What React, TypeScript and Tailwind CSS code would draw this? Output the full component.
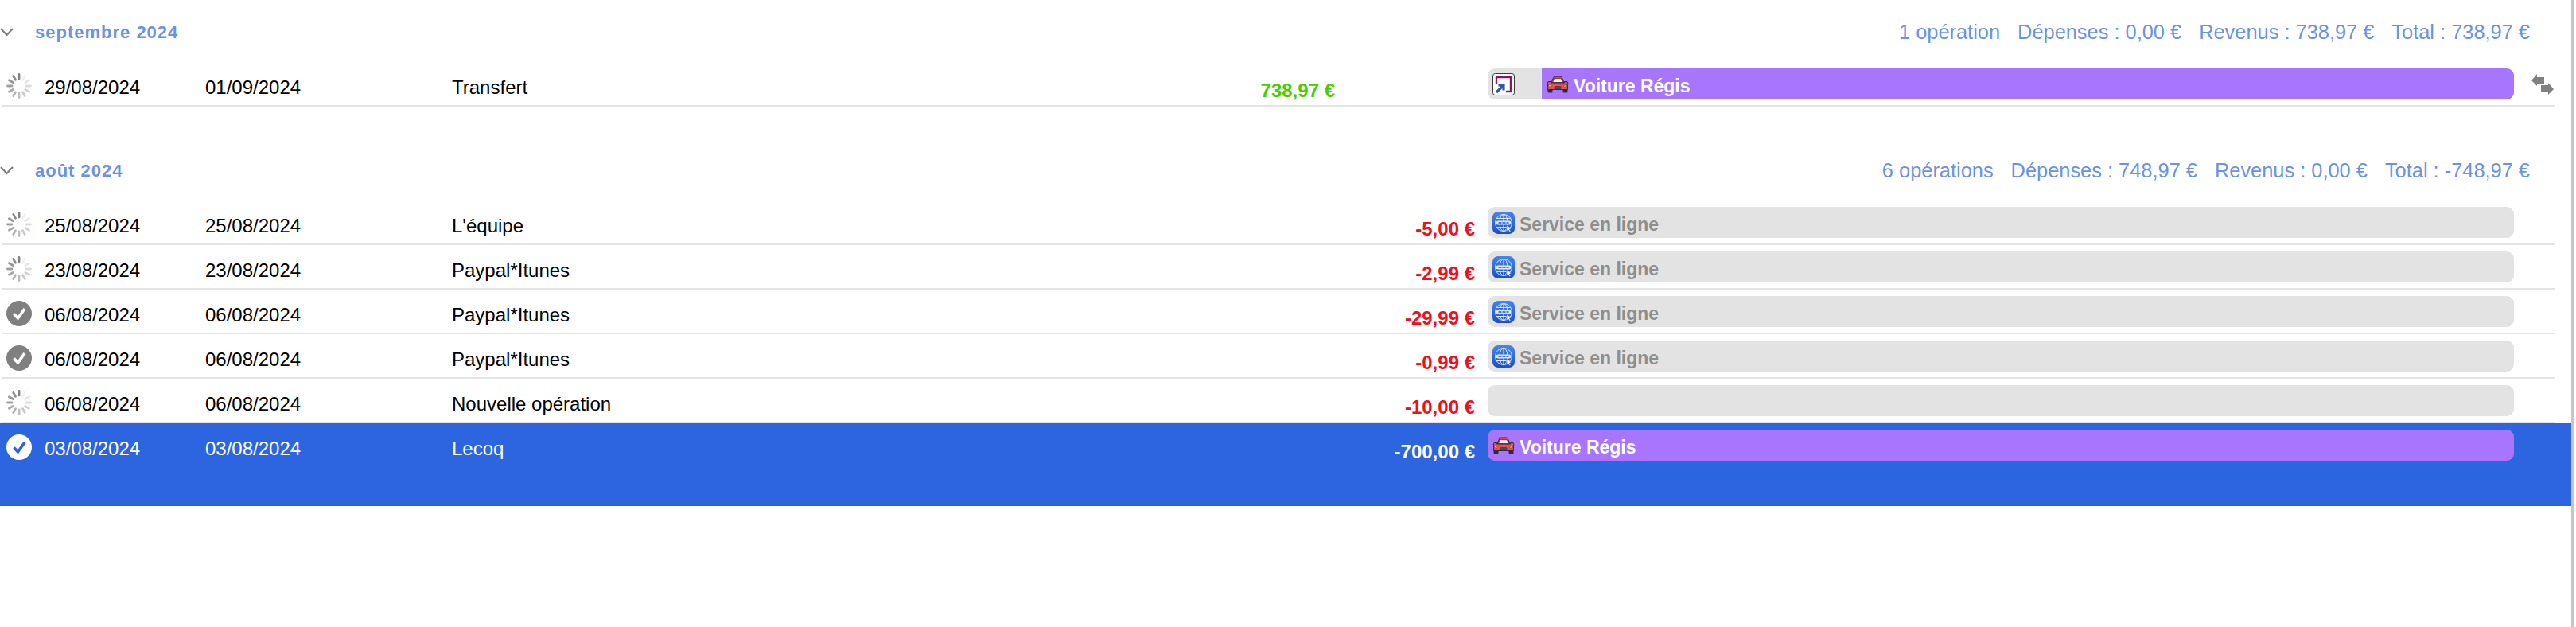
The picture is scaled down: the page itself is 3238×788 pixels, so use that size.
const BLUE_HEADER = "text-[#6b93e3]";

type Category = "online" | "car" | "none";

type Operation = {
  status: "pending" | "checked";
  date: string;
  valueDate: string;
  label: string;
  amount: string;
  category: Category;
  selected?: boolean;
};

const august: Operation[] = [
  { status: "pending", date: "25/08/2024", valueDate: "25/08/2024", label: "L'équipe", amount: "-5,00 €", category: "online" },
  { status: "pending", date: "23/08/2024", valueDate: "23/08/2024", label: "Paypal*Itunes", amount: "-2,99 €", category: "online" },
  { status: "checked", date: "06/08/2024", valueDate: "06/08/2024", label: "Paypal*Itunes", amount: "-29,99 €", category: "online" },
  { status: "checked", date: "06/08/2024", valueDate: "06/08/2024", label: "Paypal*Itunes", amount: "-0,99 €", category: "online" },
  { status: "pending", date: "06/08/2024", valueDate: "06/08/2024", label: "Nouvelle opération", amount: "-10,00 €", category: "none" },
  { status: "checked", date: "03/08/2024", valueDate: "03/08/2024", label: "Lecoq", amount: "-700,00 €", category: "car", selected: true },
];

const Chevron = () => (
  <svg className="w-[18px] h-[12px] shrink-0" viewBox="0 0 18 12" fill="none" stroke="#7f7f7f" strokeWidth={2.2}>
    <path d="M1 2l7.500 8L16 2" />
  </svg>
);

const Spinner = () => (
  <svg className="w-8 h-8" viewBox="0 0 32 32" strokeWidth={2.8} strokeLinecap="round">
    {Array.from({ length: 12 }).map((_, i) => {
      // spoke 0 is at 12 o'clock, darkest; fades going anticlockwise
      const shade = 130 + ((12 - i) % 12) * 10;
      const c = `rgb(${shade},${shade},${shade})`;
      return <line key={i} x1="16" y1="1.500" x2="16" y2="7" stroke={c} transform={`rotate(${i * 30} 16 16)`} />;
    })}
  </svg>
);

const Check = ({ selected }: { selected?: boolean }) => (
  <svg className="w-8 h-8" viewBox="0 0 32 32" fill="none">
    <circle cx="16" cy="16" r="16" fill={selected ? "#ffffff" : "#808080"} />
    <path d="M9.500 16.500l5 5.500 8.500-12" stroke={selected ? "#2d65e0" : "#ffffff"} strokeWidth={3.6} />
  </svg>
);

const GlobeIcon = () => (
  <svg className="w-7 h-7 shrink-0" viewBox="0 0 28 28" fill="none">
    <defs>
      <linearGradient id="globe-bg" x1="0" y1="0" x2="0" y2="1">
        <stop offset="0" stopColor="#4486ee" />
        <stop offset="1" stopColor="#1d4fc4" />
      </linearGradient>
    </defs>
    <rect width="28" height="28" rx="7" fill="url(#globe-bg)" />
    <g stroke="#dbe7fb" strokeWidth={1}>
      <circle cx="14" cy="14" r="10.500" />
      <ellipse cx="14" cy="14" rx="5" ry="10.500" />
      <path d="M14 3.500v21M5 8.500h18M5 19.500h18" />
    </g>
    <rect x="4.500" y="11.500" width="19" height="5" rx="2.500" fill="#dbe7fb" />
    <path d="M7.500 14h13" stroke="#4a78cf" strokeWidth={2} strokeDasharray="1.500 1" />
    <path d="M18 17l6 4.500-2.600.5 1.500 2.700-1.400.8-1.500-2.700-2 1.800z" fill="#ffffff" stroke="#2a5cc8" strokeWidth={0.6} />
  </svg>
);

const CarIcon = () => (
  <svg className="w-7 h-[22px] shrink-0" viewBox="0 0 28 22" fill="none">
    <rect x="1.500" y="15" width="6" height="6.500" rx="1.500" fill="#33293b" />
    <rect x="20.500" y="15" width="6" height="6.500" rx="1.500" fill="#33293b" />
    <path d="M6 9l2.600-6.600Q9 1 11 1h6q2 0 2.400 1.400L22 9z" fill="#d9434f" stroke="#33293b" strokeWidth={1} />
    <path d="M7.500 8.500l2.200-4.800h8.600l2.200 4.800z" fill="#f6f2f2" stroke="#33293b" strokeWidth={0.7} />
    <path d="M2 7.500h3.500V9h17V7.500H26l1 2.500-.6 1v6.500H1.600V11L1 10z" fill="#e2505c" stroke="#33293b" strokeWidth={1} />
    <path d="M2.500 11l4 1.800-.6 1.400-3.400-.8zM25.500 11l-4 1.800.6 1.400 3.400-.8z" fill="#f2e23c" stroke="#33293b" strokeWidth={0.5} />
    <rect x="10" y="13.500" width="8" height="3.600" rx="0.800" fill="#4d4a5c" stroke="#33293b" strokeWidth={0.5} />
  </svg>
);

const TransferIcon = () => (
  <svg className="w-7 h-7 shrink-0" viewBox="0 0 28 28" fill="none">
    <rect x="0.500" y="0.500" width="27" height="27" rx="3" fill="#ffffff" stroke="#3c3c3c" strokeWidth={1} />
    <path d="M5 13V5h18v18h-6" stroke="#8f1567" strokeWidth={2.400} />
    <path d="M5 24l8-8M7.500 15h6.500v6.500" stroke="#2a5aa8" strokeWidth={3.200} />
  </svg>
);

const SwapIcon = () => (
  <svg className="w-7 h-[26px]" viewBox="0 0 28 26" fill="#808080">
    <path d="M0 8l7-8v4h9v8H7v3z" />
    <path d="M28 19l-7-8v3h-9v8h9v4z" />
  </svg>
);

const CategoryPill = ({ category }: { category: Category }) => {
  if (category === "online") {
    return (
      <div className="h-[39px] rounded-[9px] bg-[#e3e3e3] flex items-center pl-[6px] gap-[6px]">
        <GlobeIcon />
        <span className="pt-1 text-[23px] leading-7 font-bold text-[#8e8e8e]">Service en ligne</span>
      </div>
    );
  }
  if (category === "car") {
    return (
      <div className="h-[39px] rounded-[9px] bg-[#a875ff] flex items-center pl-[6px] gap-[6px]">
        <CarIcon />
        <span className="pt-1 text-[23px] leading-7 font-bold text-white">Voiture Régis</span>
      </div>
    );
  }
  return <div className="h-[39px] rounded-[9px] bg-[#e3e3e3]" />;
};

const Row = ({ op }: { op: Operation }) => (
  <div className={`flex items-start ${op.selected ? "h-[104px] bg-[#2d65e0] text-white" : "h-14 ml-[2px] mr-5 border-b-2 border-[#e4e4e4] text-black"}`}>
    <div className={`pt-[14px] shrink-0 ${op.selected ? "w-[56px] pl-2" : "w-[54px] pl-[6px]"}`}>
      {op.status === "pending" ? <Spinner /> : <Check selected={op.selected} />}
    </div>
    <div className="w-[202px] pt-[18px] text-2xl leading-7 shrink-0">{op.date}</div>
    <div className="w-[310px] pt-[18px] text-2xl leading-7 shrink-0">{op.valueDate}</div>
    <div className="flex-1 pt-[18px] text-2xl leading-7">{op.label}</div>
    <div className={`w-[300px] pt-[22px] text-2xl leading-7 font-bold text-right shrink-0 ${op.selected ? "text-white" : "text-[#f00f1a]"}`}>
      {op.amount}
    </div>
    <div className="w-[1290px] ml-4 pt-2 shrink-0">
      <CategoryPill category={op.category} />
    </div>
    <div className={`shrink-0 ${op.selected ? "w-[72px]" : "w-[52px]"}`} />
  </div>
);

const GroupHeader = ({ title, stats }: { title: string; stats: string[] }) => (
  <div className="h-[76px] flex items-center">
    <div className="w-[44px] shrink-0">
      <Chevron />
    </div>
    <span className={`text-[22px] font-bold tracking-[1px] ${BLUE_HEADER}`}>{title}</span>
    <div className={`ml-auto mr-[52px] flex gap-[22px] text-[25.4px] ${BLUE_HEADER}`}>
      {stats.map((s) => (
        <span key={s}>{s}</span>
      ))}
    </div>
  </div>
);

export default function App() {
  return (
    <div className="h-screen flex bg-white font-['Liberation_Sans',Arial,sans-serif] overflow-hidden">
      <main className="w-[3232px] shrink-0 pt-[2px]">
        <GroupHeader title="septembre 2024" stats={["1 opération", "Dépenses : 0,00 €", "Revenus : 738,97 €", "Total : 738,97 €"]} />
        <div className="h-14 ml-[2px] mr-5 border-b-2 border-[#e4e4e4] flex items-start">
          <div className="pl-[6px] pt-[14px] w-[54px] shrink-0">
            <Spinner />
          </div>
          <div className="w-[202px] pt-[18px] text-2xl leading-7 text-black shrink-0">29/08/2024</div>
          <div className="w-[310px] pt-[18px] text-2xl leading-7 text-black shrink-0">01/09/2024</div>
          <div className="flex-1 pt-[18px] text-2xl leading-7 text-black">Transfert</div>
          <div className="w-[176px] pt-[22px] text-2xl leading-7 font-bold text-[#46cf00] text-right shrink-0 mr-[176px]">738,97 €</div>
          <div className="w-[1290px] ml-4 mt-2 h-[39px] rounded-[9px] bg-[#e3e3e3] flex shrink-0 overflow-hidden">
            <div className="w-[68px] pl-[6px] pt-[6px] shrink-0">
              <TransferIcon />
            </div>
            <div className="flex-1 bg-[#a875ff] flex items-center pl-[6px] gap-[6px]">
              <CarIcon />
              <span className="pt-1 text-[23px] leading-7 font-bold text-white">Voiture Régis</span>
            </div>
          </div>
          <div className="w-[52px] shrink-0 pt-[15px] pl-[22px]">
            <SwapIcon />
          </div>
        </div>

        <div className="mt-[42px]">
          <GroupHeader title="août 2024" stats={["6 opérations", "Dépenses : 748,97 €", "Revenus : 0,00 €", "Total : -748,97 €"]} />
          {august.map((op, i) => (
            <Row key={i} op={op} />
          ))}
        </div>
      </main>
      <div className="w-[3px] shrink-0 bg-[#c6c6c6]" />
    </div>
  );
}
